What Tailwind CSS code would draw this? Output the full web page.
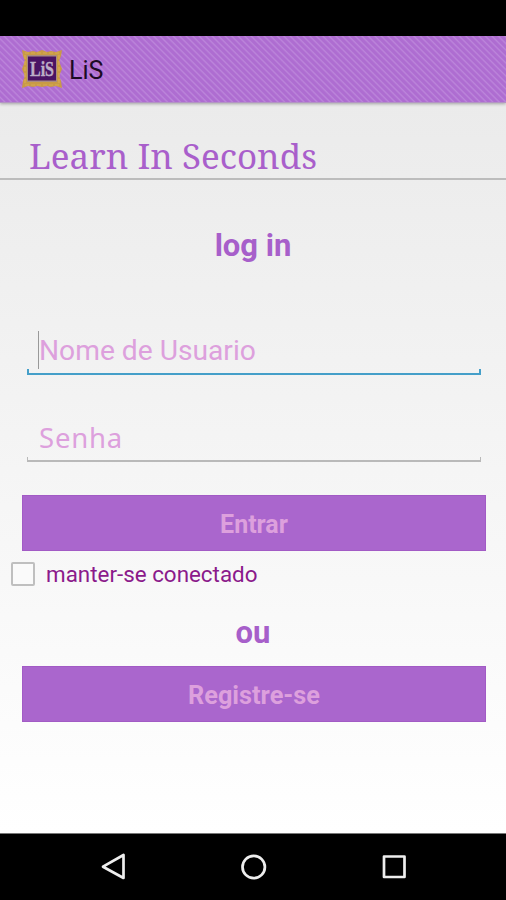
<!DOCTYPE html>
<html lang="pt">
<head>
  <meta charset="UTF-8" />
  <meta name="viewport" content="width=device-width, initial-scale=1.0"/>
  <title>LiS</title>
  <script src="https://cdn.jsdelivr.net/npm/@tailwindcss/browser@4"></script>
</head>
<body class="h-[900px] w-[506px] flex flex-col overflow-hidden bg-black font-['Roboto',sans-serif]">

  <!-- Status bar -->
  <div class="h-9 shrink-0 bg-black"></div>

  <!-- Action bar -->
  <header class="relative z-10 h-[67px] shrink-0 flex items-center gap-1.5 pl-[21px] border-b border-[#b394c4] shadow-[0_1px_3px_rgba(0,0,0,0.3)] bg-[#b070d2] bg-[repeating-linear-gradient(45deg,#ae6dd1_0px,#ae6dd1_2px,#bb84da_3.4px,#bb84da_3.6px,#ae6dd1_4.6px)]">
    <svg class="w-[42px] h-10" viewBox="0 0 42 40">
      <path d="M1 1l6 2 5-1 4 1 5-2 5 2 4-1 5 1 6-2-1 6-2 5 3 8-3 7 2 5 1 7-6-2-5 1-4-1-5 1-5-1-4 1-5-1-6 2 1-7 2-5-3-7 3-8-2-5z" fill="#c99b45"/>
      <path d="M4 4h34v32H4z" fill="none" stroke="#d8ac55" stroke-width="1.2" stroke-dasharray="4 2"/>
      <path d="M6 6h30v27H6z" fill="#a98c80"/>
      <path d="M7 7.5h28v24H7z" fill="#4a1464"/>
      <text x="21" y="27" text-anchor="middle" textLength="24" lengthAdjust="spacingAndGlyphs" font-family="Liberation Serif, serif" font-weight="bold" font-size="22" fill="#bdaec6" stroke="#bdaec6" stroke-width=".4">LiS</text>
    </svg>
    <h1 class="text-[25px] leading-none text-[#1c0b24] pt-0.5">LiS</h1>
  </header>

  <main class="h-[730px] shrink-0 flex flex-col bg-linear-to-b from-[#ebebeb] to-white">
    <div class="h-[77px] shrink-0 border-b-2 border-[#bcbcbc] pl-[29px] pt-[29px]">
      <h2 class="text-[35px] leading-[48px] text-[#a95fcb] font-['Noto_Serif',serif] whitespace-nowrap">Learn In Seconds</h2>
    </div>

    <p class="mt-[46px] h-10 text-center text-[31px] leading-10 font-bold text-[#a75fca]">log in</p>

    <!-- Login fields -->
    <div class="mt-[62px] ml-[27px] w-[454px] h-[47px] flex flex-col justify-end">
      <div class="flex items-center h-[39px] pl-[11px]">
        <span class="w-px h-[38px] bg-[#999]"></span>
        <span class="text-[28.2px] leading-none text-[#dda0dd] pt-1">Nome de Usuario</span>
      </div>
      <div class="h-1.5 border-x-2 border-b-2 border-[#459fc9]"></div>
    </div>
    <div class="mt-[40px] ml-[27px] w-[454px] h-[47px] flex flex-col justify-end">
      <span class="pl-3 pt-px h-10 text-[27.5px] leading-10 tracking-[0.8px] text-[#dda0dd] font-['Noto_Sans',sans-serif]">Senha</span>
      <div class="h-[5px] border-x border-b-2 border-[#b9b9b9]"></div>
    </div>

    <button class="mt-[33px] ml-[22px] w-[464px] h-14 shrink-0 border border-[#a25bc5] bg-[#aa66cd] pt-[3px] text-[25px] font-bold text-[#dda0dd]">Entrar</button>
    <label class="flex items-center mt-[10px] ml-[11px] h-[26px]">
      <span class="w-6 h-6 border-2 border-[#bfbfbf] rounded-xs bg-[#fafafa]"></span>
      <span class="ml-[11px] text-[22.4px] leading-none text-[#8b1a8b]">manter-se conectado</span>
    </label>
    <p class="mt-[26px] h-10 text-center text-[31px] leading-10 font-bold text-[#a75fca]">ou</p>
    <button class="mt-[13px] ml-[22px] w-[464px] h-14 shrink-0 border border-[#a25bc5] bg-[#aa66cd] pt-[3px] text-[25.3px] font-bold text-[#dda0dd]">Registre-se</button>
  </main>

  <!-- Navigation bar -->
  <nav class="h-[67px] shrink-0 bg-black border-t border-[#777]">
    <svg class="w-[506px] h-[66px]" viewBox="0 834 506 66" fill="none" stroke="#eee" stroke-width="2.7" stroke-linejoin="round">
      <path d="M123.5 855v23L103 866.7z"/>
      <circle cx="253.7" cy="867" r="11.2"/>
      <rect x="384" y="856.5" width="20.5" height="20.5"/>
    </svg>
  </nav>

</body>
</html>
